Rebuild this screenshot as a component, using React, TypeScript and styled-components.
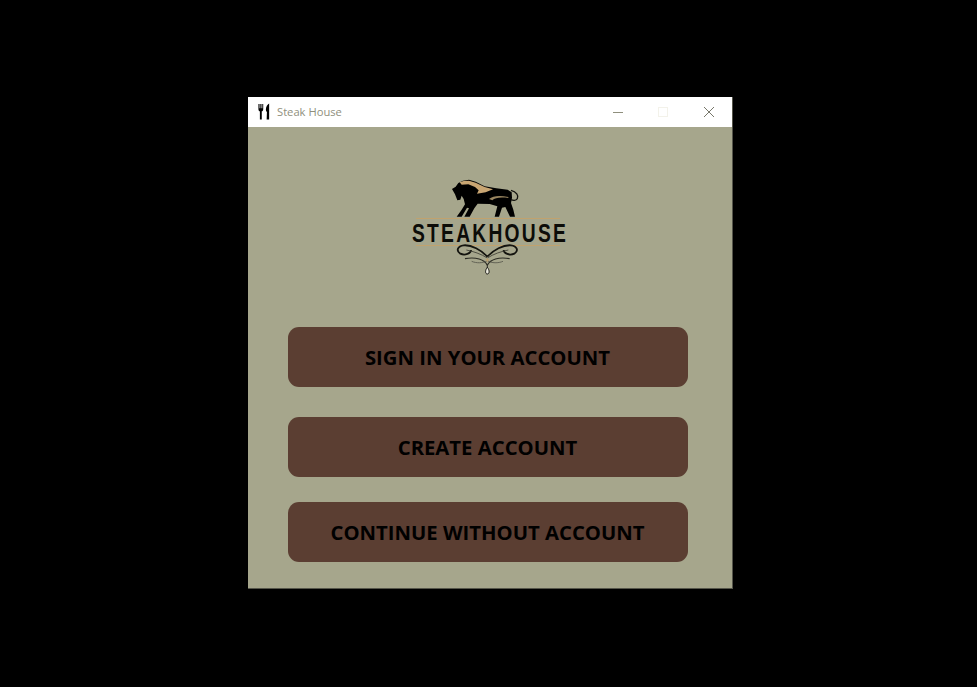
import React from 'react'
import styled, { createGlobalStyle } from 'styled-components'

const GlobalStyle = createGlobalStyle`
  html, body {
    margin: 0;
    padding: 0;
    background: #000;
  }
`

const Desktop = styled.div`
  width: 977px;
  height: 687px;
  padding: 97px 0 0 248px;
  box-sizing: border-box;
  background: #000;
`

const Window = styled.div`
  width: 485px;
  height: 492px;
  display: flex;
  flex-direction: column;
  box-sizing: border-box;
  background: #a6a68c;
  border: solid #55554a;
  border-width: 0 1px 1px 0;
`

const TitleBar = styled.div`
  height: 30px;
  flex: none;
  display: flex;
  align-items: center;
  background: #fff;
  padding-left: 10px;
`

const IconSlot = styled.span`
  display: flex;
  margin-bottom: 2px;
`

const TitleText = styled.span`
  margin: 0 0 2px 7px;
  font: 11.2px 'Open Sans', sans-serif;
  color: #8f8f7d;
`

const WindowControls = styled.div`
  margin-left: auto;
  display: flex;
  height: 100%;
`

const ControlButton = styled.div`
  width: 46px;
  display: flex;
  align-items: center;
  justify-content: center;
  padding-bottom: 1px;
  box-sizing: border-box;
`

const Content = styled.div`
  flex: 1;
  display: flex;
  flex-direction: column;
  align-items: center;
  padding: 43px 5px 0 0;
`

const LogoWrap = styled.div`
  width: 180px;
  height: 110px;
  margin-bottom: 47px;
`

const ActionButton = styled.button<{ $gap: number }>`
  width: 400px;
  height: 60px;
  margin-bottom: ${(p) => p.$gap}px;
  padding: 0;
  border: none;
  border-radius: 11px;
  background: #5b3e32;
  color: #000;
  font: 700 20.3px 'Open Sans', sans-serif;
  text-align: center;
`

const ForkKnifeIcon = () => (
  <svg width="12" height="17" viewBox="0 0 14 18" preserveAspectRatio="none">
    <path d="M0.5 1v5.5c0 1.3.8 2 1.7 2.3V17.5h2.2V8.8c.9-.3 1.7-1 1.7-2.3V1H5v4.5H4.1V1H2.7v4.5H1.8V1z" fill="#000" />
    <path d="M13 .6c-2 1-3.8 3.5-3.8 6.2 0 1.2.4 2.2 1.2 2.6l-.3 8.1H13z" fill="#000" />
  </svg>
)

const MinimizeIcon = () => (
  <svg width="12" height="10" viewBox="0 0 12 10">
    <path d="M2 5.5h10" stroke="#8f8f7d" strokeWidth="1" />
  </svg>
)

const MaximizeIcon = () => (
  <svg width="10" height="10" viewBox="0 0 10 10">
    <rect x="0.5" y="0.5" width="9" height="9" fill="none" stroke="#f3f2ea" strokeWidth="1" />
  </svg>
)

const CloseIcon = () => (
  <svg width="10" height="10" viewBox="0 0 10 10">
    <path d="M0 0l10 10M10 0L0 10" stroke="#77776a" strokeWidth="1" />
  </svg>
)

const ScrollHalf = () => (
  <g fill="none">
    <path d="M103 50 C85 30 55 14 32 16 C14 18 8 32 22 41 C36 48 54 40 54 30" stroke="#14140f" strokeWidth="5.5" />
    <path d="M103 54 C85 42 60 34 40 30" stroke="#3c3c32" strokeWidth="2.5" />
    <path d="M103 76 C95 58 68 50 36 56" stroke="#2c2c24" strokeWidth="3.5" />
    <path d="M103 62 C90 70 70 70 56 64" stroke="#55554a" strokeWidth="2.5" />
  </g>
)

// coordinates follow a 3x grid of the 180x110 logo
const Logo = () => (
  <svg width="180" height="110" viewBox="0 0 540 330">
    <g transform="translate(135 15)">
      <path
        d="M27 42 L38 35 L46 24 L60 17 L78 14 L98 20 L125 34 L160 40 L194 44 L206 52 L207 68 L204 84 L211 104 L216 125 L201 125 L187 96 L177 98 L168 125 L155 125 L163 94 L140 87 L104 86 L94 100 L80 125 L64 125 L78 100 L72 98 L56 125 L41 125 L56 104 L66 88 L62 72 L56 62 L52 74 L43 76 L36 58 Z"
        fill="#000"
      />
      <path d="M50 22 L62 18 L78 17 L98 23 L125 36 L150 43 L128 52 L102 56 L107 46 L96 36 L76 28 L56 29 Z" fill="#c9a673" />
      <path d="M138 72 C150 62 170 60 196 66 L196 69 C172 66 156 68 148 76 Z" fill="#9a8660" />
      <path d="M204 46 C220 50 228 62 223 71 C219 77 210 77 204 74" fill="none" stroke="#14140f" strokeWidth="4" />
    </g>
    <path d="M54 144h432v3H54z" fill="#c0a26e" />
    <text
      transform="translate(42 215) scale(0.78 1.05)"
      textLength="592"
      lengthAdjust="spacing"
      fontFamily="'Liberation Sans', sans-serif"
      fontWeight="700"
      fontSize="74"
      fill="#0c0c08"
    >
      STEAKHOUSE
    </text>
    <path d="M54 225h432v3H54z" fill="#c0a26e" />
    <g transform="translate(165 210)">
      <ScrollHalf />
      <g transform="translate(206 0) scale(-1 1)">
        <ScrollHalf />
      </g>
      <path d="M103 74 V84" stroke="#2c2c24" strokeWidth="3" />
      <path d="M103 54 L108 60 L103 66 L98 60 Z" fill="#bb9e6d" />
      <path d="M103 82 C110 90 110 102 103 102 C96 102 96 90 103 82 Z" fill="#ecebdf" stroke="#14140f" strokeWidth="3" />
    </g>
  </svg>
)

const buttons = [
  { label: 'SIGN IN YOUR ACCOUNT', gap: 30 },
  { label: 'CREATE ACCOUNT', gap: 25 },
  { label: 'CONTINUE WITHOUT ACCOUNT', gap: 0 },
]

export default function App() {
  return (
    <>
      <GlobalStyle />
      <Desktop>
        <Window>
          <TitleBar>
            <IconSlot>
              <ForkKnifeIcon />
            </IconSlot>
            <TitleText>Steak House</TitleText>
            <WindowControls>
              <ControlButton>
                <MinimizeIcon />
              </ControlButton>
              <ControlButton>
                <MaximizeIcon />
              </ControlButton>
              <ControlButton>
                <CloseIcon />
              </ControlButton>
            </WindowControls>
          </TitleBar>
          <Content>
            <LogoWrap>
              <Logo />
            </LogoWrap>
            {buttons.map((b) => (
              <ActionButton key={b.label} $gap={b.gap}>
                {b.label}
              </ActionButton>
            ))}
          </Content>
        </Window>
      </Desktop>
    </>
  )
}
